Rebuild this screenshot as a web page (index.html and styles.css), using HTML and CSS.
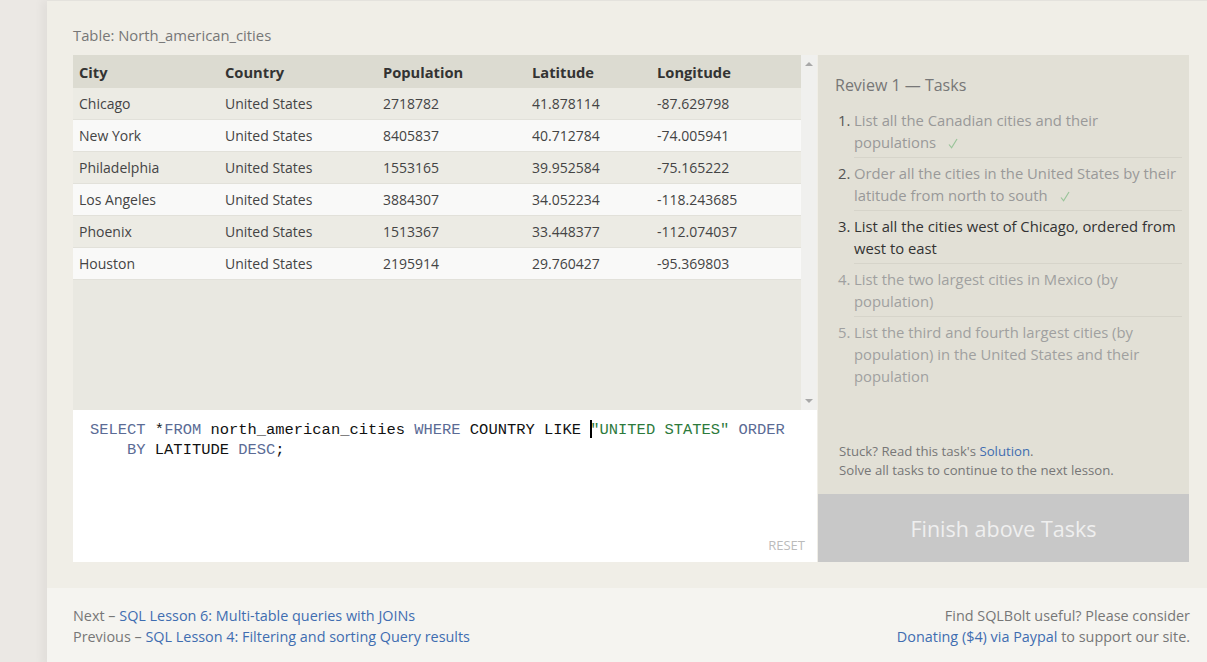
FILE: index.html
```html
<!DOCTYPE html>
<html>
<head>
<meta charset="utf-8">
<link rel="stylesheet" href="styles.css">
</head>
<body>
<div class="page">
  <div class="content">
    <div class="table-label">Table: North_american_cities</div>
    <div class="exercise">
      <div class="left">
        <div class="results">
          <div class="table-wrap">
            <table class="data">
              <colgroup>
                <col class="c1"><col class="c2"><col class="c3"><col class="c4"><col>
              </colgroup>
              <thead>
                <tr><th>City</th><th>Country</th><th>Population</th><th>Latitude</th><th>Longitude</th></tr>
              </thead>
              <tbody>
                <tr><td>Chicago</td><td>United States</td><td>2718782</td><td>41.878114</td><td>-87.629798</td></tr>
                <tr><td>New York</td><td>United States</td><td>8405837</td><td>40.712784</td><td>-74.005941</td></tr>
                <tr><td>Philadelphia</td><td>United States</td><td>1553165</td><td>39.952584</td><td>-75.165222</td></tr>
                <tr><td>Los Angeles</td><td>United States</td><td>3884307</td><td>34.052234</td><td>-118.243685</td></tr>
                <tr><td>Phoenix</td><td>United States</td><td>1513367</td><td>33.448377</td><td>-112.074037</td></tr>
                <tr><td>Houston</td><td>United States</td><td>2195914</td><td>29.760427</td><td>-95.369803</td></tr>
              </tbody>
            </table>
          </div>
          <div class="scrollbar">
            <span class="arrow-up"></span>
            <span class="arrow-down"></span>
          </div>
        </div>
        <div class="editor">
          <div class="code"><span class="kw">SELECT</span> *<span class="kw">FROM</span> north_american_cities <span class="kw">WHERE</span> COUNTRY LIKE <span class="cursor"></span><span class="str">"UNITED STATES"</span> <span class="kw">ORDER</span><br><span class="indent"></span><span class="kw">BY</span> LATITUDE <span class="kw">DESC</span>;</div>
          <div class="reset">RESET</div>
        </div>
      </div>
      <div class="right">
        <div class="tasks">
          <div class="tasks-title">Review 1 — Tasks</div>
          <ol class="task-list">
            <li class="done"><span class="num">1.</span><span class="txt">List all the Canadian cities and their populations<svg class="check" width="10" height="11" viewBox="0 0 10 11"><path d="M1 6.5 L3.6 9.8 L9 1" fill="none" stroke="#9ac49a" stroke-width="1.2"/></svg></span></li>
            <li class="done"><span class="num">2.</span><span class="txt">Order all the cities in the United States by their latitude from north to south<svg class="check" width="10" height="11" viewBox="0 0 10 11"><path d="M1 6.5 L3.6 9.8 L9 1" fill="none" stroke="#9ac49a" stroke-width="1.2"/></svg></span></li>
            <li class="current"><span class="num">3.</span><span class="txt">List all the cities west of Chicago, ordered from west to east</span></li>
            <li class="todo"><span class="num">4.</span><span class="txt">List the two largest cities in Mexico (by population)</span></li>
            <li class="todo last"><span class="num">5.</span><span class="txt">List the third and fourth largest cities (by population) in the United States and their population</span></li>
          </ol>
          <div class="hint">
            <div>Stuck? Read this task's <a class="link">Solution</a>.</div>
            <div>Solve all tasks to continue to the next lesson.</div>
          </div>
        </div>
        <div class="finish">Finish above Tasks</div>
      </div>
    </div>
  </div>
  <div class="footer">
    <div class="nav">
      <div>Next – <a class="link">SQL Lesson 6: Multi-table queries with JOINs</a></div>
      <div>Previous – <a class="link">SQL Lesson 4: Filtering and sorting Query results</a></div>
    </div>
    <div class="donate">
      <div>Find SQLBolt useful? Please consider</div>
      <div><a class="link">Donating ($4) via Paypal</a> to support our site.</div>
    </div>
  </div>
</div>
</body>
</html>
```

FILE: styles.css
```css
html, body {
  margin: 0;
  padding: 0;
  height: 100%;
}
body {
  background: #ebe8e4;
  font-family: "Open Sans", "Liberation Sans", sans-serif;
  color: #555;
  overflow: hidden;
}
.page {
  margin-left: 47px;
  min-height: 100%;
  background: #f0eee7;
  border-top: 1px solid #e4e2dd;
  box-shadow: -6px 0 8px rgba(0,0,0,0.04);
}
.content {
  padding: 23px 18px 26px 26px;
}
.table-label {
  font-size: 14.8px;
  line-height: 22px;
  color: #777;
  margin-bottom: 9px;
}
.exercise {
  display: flex;
  gap: 1px;
}
.left {
  width: 744px;
  display: flex;
  flex-direction: column;
}
.results {
  height: 355px;
  display: flex;
  background: #e9e8e1;
}
.table-wrap {
  flex: 1;
}
.data {
  width: 100%;
  border-collapse: collapse;
  font-size: 14px;
  color: #444;
}
.c1 { width: 146px; }
.c2 { width: 158px; }
.c3 { width: 149px; }
.c4 { width: 125px; }
.data th {
  background: #dcdbd1;
  text-align: left;
  font-weight: 700;
  font-size: 14.7px;
  color: #333;
  height: 33px;
  padding: 0 6px;
}
.data td {
  height: 31px;
  padding: 0 6px;
  border-bottom: 1px solid #e2e1da;
}
.data tbody tr:nth-child(odd) td {
  background: #ecebe4;
}
.data tbody tr:nth-child(even) td {
  background: #f9f9f8;
}
.scrollbar {
  width: 16px;
  background: #f0f0ee;
  position: relative;
}
.arrow-up, .arrow-down {
  position: absolute;
  left: 4px;
  width: 0;
  height: 0;
  border-left: 4px solid transparent;
  border-right: 4px solid transparent;
}
.arrow-up {
  top: 7px;
  border-bottom: 4px solid #a8a8a8;
}
.arrow-down {
  bottom: 7px;
  border-top: 4px solid #a8a8a8;
}
.editor {
  height: 152px;
  background: #fff;
  display: flex;
  flex-direction: column;
  justify-content: space-between;
}
.code {
  font-family: "Liberation Mono", "DejaVu Sans Mono", monospace;
  font-size: 15.45px;
  line-height: 20px;
  color: #111;
  padding: 10px 0 0 17px;
  white-space: nowrap;
}
.kw { color: #5b6b95; }
.str { color: #2d7a3c; }
.indent {
  display: inline-block;
  width: 4ch;
}
.cursor {
  display: inline-block;
  width: 2px;
  height: 18px;
  background: #000;
  vertical-align: -4px;
  margin-right: -2px;
}
.reset {
  align-self: flex-end;
  font-size: 13px;
  color: #bbb;
  padding: 0 12px 8px 0;
}
.right {
  width: 371px;
  display: flex;
  flex-direction: column;
}
.tasks {
  height: 439px;
  background: #e2e0d6;
  padding: 18px 7px 0 17px;
  box-sizing: border-box;
  display: flex;
  flex-direction: column;
}
.tasks-title {
  font-size: 16px;
  line-height: 24px;
  color: #777;
}
.task-list {
  list-style: none;
  margin: 12px 0 0 0;
  padding: 0;
  font-size: 14.8px;
  line-height: 22px;
}
.task-list li {
  display: flex;
  padding: 0;
  margin-bottom: 4px;
}
.task-list .num {
  width: 16px;
  padding-left: 3px;
  flex: none;
}
.task-list .txt {
  flex: 1;
  border-bottom: 1px solid #d6d4ca;
  padding-bottom: 4px;
}
.task-list li.last .txt { border-bottom: none; }
.done .num { color: #555; }
.done .txt { color: #999; }
.current .num, .current .txt { color: #333; }
.todo .num, .todo .txt { color: #a0a0a0; }
.check {
  margin-left: 12px;
  vertical-align: -1px;
}
.hint {
  margin-top: auto;
  padding: 0 0 14px 4px;
  font-size: 13.2px;
  line-height: 19px;
  color: #777;
}
.link {
  color: #3f6db0;
  text-decoration: none;
}
.finish {
  height: 68px;
  background: #c8c8c8;
  color: #efefef;
  font-size: 21.5px;
  display: flex;
  align-items: center;
  justify-content: center;
}
.footer {
  background: #f5f4f0;
  display: flex;
  justify-content: space-between;
  padding: 17px 17px 20px 26px;
  font-size: 14.4px;
  line-height: 21px;
  color: #777;
}
.donate {
  text-align: right;
}
```
